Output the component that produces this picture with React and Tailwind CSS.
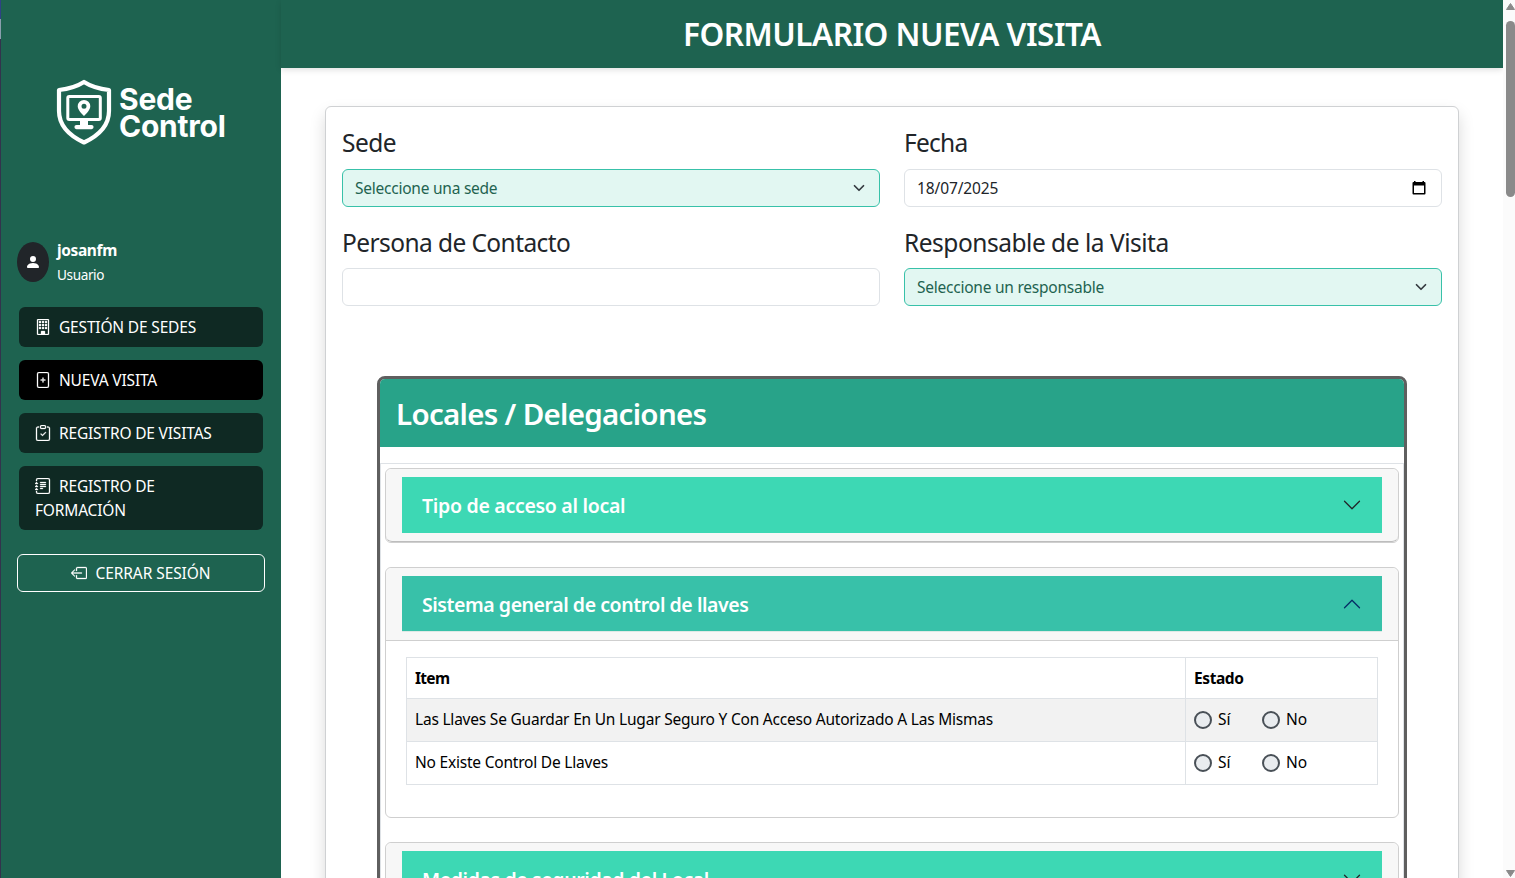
import React from "react";
import {
  BsBuilding,
  BsFilePlus,
  BsClipboardCheck,
  BsJournalText,
  BsBoxArrowLeft,
  BsPersonFill,
} from "react-icons/bs";

function Logo() {
  return (
    <div className="flex h-[66px] items-center pl-[55px]">
      <svg viewBox="0 0 56 66" className="h-[66px] w-14 shrink-0" fill="none" stroke="white">
        <path
          d="M28 3C21 7.500 12 10 3 11V32C3 46 12 56 28 63.500C44 56 53 46 53 32V11C44 10 35 7.500 28 3Z"
          strokeWidth="4.200"
          strokeLinejoin="round"
        />
        <rect x="11.800" y="17.500" width="32.500" height="23" rx="1.500" strokeWidth="3" />
        <path d="M24 41H32V46H35.500a2.100 2.100 0 0 1 0 4.200H20.500a2.100 2.100 0 0 1 0-4.200H24Z" fill="white" stroke="none" />
        <path
          d="M28 21a6.300 6.300 0 0 0-6.300 6.300c0 4.200 6.300 9.800 6.300 9.800s6.300-5.600 6.300-9.800a6.300 6.300 0 0 0-6.300-6.300Zm0 3.700a2.500 2.500 0 1 1 0 5a2.500 2.500 0 0 1 0-5Z"
          fill="white"
          fillRule="evenodd"
          stroke="none"
        />
      </svg>
      <div className="ml-[7px] mt-px font-['Inter',sans-serif] text-[30px] font-bold leading-[27px] tracking-[-0.25px] text-white">
        <div>Sede</div>
        <div>Control</div>
      </div>
    </div>
  );
}

function NavItem({ icon: Icon, children, active }) {
  return (
    <a
      className={
        "block rounded-md px-4 py-2 text-[15.5px] leading-6 tracking-[-0.17px] text-white " +
        (active ? "bg-black" : "bg-[#0f2923]")
      }
    >
      <Icon className="mr-2 inline-block size-4 stroke-[0.3] align-[-2px]" />
      {children}
    </a>
  );
}

function Chevron({ className = "", up, size = 16, width = 2 }) {
  return (
    <svg viewBox="0 0 16 16" width={size} height={size} fill="none" stroke="currentColor" strokeWidth={width} strokeLinecap="round" strokeLinejoin="round" className={"shrink-0 " + className}>
      <path d={up ? "m2 11 6-6 6 6" : "m2 5 6 6 6-6"} />
    </svg>
  );
}

function CalendarIcon() {
  return (
    <svg viewBox="0 0 14 14" className="h-3.5 w-3.5 shrink-0">
      <path
        fill="black"
        fillRule="evenodd"
        d="M2 0h1.500v1h7V0H12v1h.5a1 1 0 0 1 1 1v10.500a1 1 0 0 1-1 1h-11a1 1 0 0 1-1-1V2a1 1 0 0 1 1-1H2ZM2 4.500v7.500h10V4.500Z"
      />
    </svg>
  );
}

function Field({ label, labelClass, children }) {
  return (
    <div className="flex flex-col">
      <label className={"h-[29px] whitespace-nowrap text-[24.5px] leading-[29px] text-[#212529] " + labelClass}>{label}</label>
      {children}
    </div>
  );
}

function Select({ children }) {
  return (
    <div className="flex h-[38px] items-center justify-between rounded-md border border-[#38c1a9] bg-[#e2f7f2] pl-3 pr-3.5 text-[15.5px] leading-6 tracking-[-0.24px] text-[#1f6350]">
      {children}
      <Chevron className="text-[#343a40]" size={12} width={2.3} />
    </div>
  );
}

function Panel({ title, titleClass, open, children }) {
  return (
    <section className="rounded-md border border-[#cfcfcf] bg-white">
      <div className={"rounded-t-md border-b bg-[#f7f7f7] px-4 py-2 " + (open ? "border-[#cfcfcf]" : "rounded-b-md border-[#bdbdbd]")}>
        <div className={"flex h-14 items-center justify-between px-5 text-white " + (open ? "border-b border-[#dee9e6] bg-[#38c1a9]" : "bg-[#3dd8b4]")}>
          <span className={"whitespace-nowrap pt-0.5 text-[19.5px] font-semibold " + titleClass}>{title}</span>
          <Chevron up={open} size={20} width={1} className={open ? "text-[#052c65]" : "text-[#212529]"} />
        </div>
      </div>
      {children}
    </section>
  );
}

function Radio({ children, className = "" }) {
  return (
    <label className={"flex items-center " + className}>
      <span className="mr-1.5 size-[18px] rounded-full border-2 border-[#495057] bg-[#e9ecef]" />
      {children}
    </label>
  );
}

function Row({ text, striped }) {
  return (
    <div className={"flex h-[43px] border-b border-[#dee2e6] " + (striped ? "bg-[#f2f2f2]" : "")}>
      <div className="flex w-[779px] items-center border-r border-[#dee2e6] pb-px pl-2 tracking-[-0.21px]">{text}</div>
      <div className="flex items-center pl-2">
        <Radio className="w-[68px]">Sí</Radio>
        <Radio>No</Radio>
      </div>
    </div>
  );
}

export default function App() {
  return (
    <div className="flex h-[878px] w-[1515px] overflow-hidden bg-white font-['Noto_Sans',sans-serif] text-[15.5px] text-black">
      <div className="flex w-px flex-col bg-[#33334d]">
        <div className="h-[19px] bg-[#2f4285]" />
        <div className="h-5 bg-[#8a9fae]" />
      </div>
      <aside className="flex w-[280px] flex-col bg-[#1e6350]">
        <div className="mt-[79px]"><Logo /></div>
        <div className="mt-[93px] flex h-12 items-center pl-4">
          <div className="flex h-10 w-8 items-center justify-center rounded-[50%] bg-[#212529]">
            <BsPersonFill className="size-4 text-white" />
          </div>
          <div className="ml-2 text-white">
            <div className="font-bold leading-6 tracking-[-0.38px]">josanfm</div>
            <div className="pt-px text-[13.6px] leading-6 tracking-[-0.4px]">Usuario</div>
          </div>
        </div>
        <nav className="mt-[21px] flex flex-col gap-[13px] px-[18px]">
          <NavItem icon={BsBuilding}>GESTIÓN DE SEDES</NavItem>
          <NavItem icon={BsFilePlus} active>NUEVA VISITA</NavItem>
          <NavItem icon={BsClipboardCheck}>REGISTRO DE VISITAS</NavItem>
          <NavItem icon={BsJournalText}>REGISTRO DE<br />FORMACIÓN</NavItem>
        </nav>
        <button className="mx-4 mt-6 flex h-[38px] items-center justify-center rounded-md border border-white leading-6 tracking-[-0.08px] text-white">
          <BsBoxArrowLeft className="mr-2 size-4 stroke-[0.3]" />
          CERRAR SESIÓN
        </button>
      </aside>
      <main className="flex w-[1222px] flex-col">
        <header className="flex h-[68px] shrink-0 items-center justify-center bg-[#1e6350] text-[31.5px] font-semibold tracking-[-0.5px] text-white shadow-[0_2px_6px_rgba(0,0,0,0.12)]">
          FORMULARIO NUEVA VISITA
        </header>
        <div className="mx-11 mt-[38px] h-[900px] shrink-0 rounded-md border border-[#cfd1d3] bg-white px-4 pt-[21px] shadow-[0_8px_16px_rgba(0,0,0,0.15)]">
          <div className="grid grid-cols-2 gap-x-6 gap-y-[21px]">
            <Field label="Sede" labelClass="mb-3 tracking-[-0.5px]"><Select>Seleccione una sede</Select></Field>
            <Field label="Fecha" labelClass="mb-3 tracking-[-0.75px]">
              <div className="flex h-[38px] items-center justify-between rounded-md border border-[#dee2e6] pl-3 pr-[15px] leading-6 tracking-[-0.12px] text-[#212529]">
                18/07/2025
                <CalendarIcon />
              </div>
            </Field>
            <Field label="Persona de Contacto" labelClass="mb-[11px] tracking-[-0.58px]"><div className="h-[38px] rounded-md border border-[#dee2e6]" /></Field>
            <Field label="Responsable de la Visita" labelClass="mb-[11px] tracking-[-0.48px]"><Select>Seleccione un responsable</Select></Field>
          </div>
          <div className="mx-[35px] mt-[70px] h-[700px] rounded-lg border-[3px] border-[#5f5f5f]">
            <h2 className="flex h-[68px] items-center rounded-t-[5px] bg-[#28a389] pl-4 pt-0.5 text-[29.5px] font-semibold tracking-[-0.7px] text-white">Locales / Delegaciones</h2>
            <div className="mt-4 flex flex-col gap-6 border border-[#dee2e6] p-1">
              <Panel title="Tipo de acceso al local" titleClass="tracking-[-0.29px]" />
              <Panel title="Sistema general de control de llaves" titleClass="tracking-[-0.44px]" open>
                <div className="px-5 pb-8 pt-4">
                  <div className="border border-b-0 border-[#dee2e6]">
                    <div className="flex h-[41px] border-b border-[#dee2e6] font-bold leading-6">
                      <div className="flex w-[779px] items-center border-r border-[#dee2e6] pl-2 tracking-[-0.7px]">Item</div>
                      <div className="flex items-center pl-2 tracking-[-0.4px]">Estado</div>
                    </div>
                    <Row striped text="Las Llaves Se Guardar En Un Lugar Seguro Y Con Acceso Autorizado A Las Mismas" />
                    <Row text="No Existe Control De Llaves" />
                  </div>
                </div>
              </Panel>
              <Panel title="Medidas de seguridad del Local" titleClass="tracking-[-0.38px]" />
            </div>
          </div>
        </div>
      </main>
      <div className="flex w-3 flex-col items-end justify-between bg-[#fbfbfb] pb-px pt-[3px]">
        <div>
          <svg viewBox="0 0 9 7" className="h-[7px] w-[9px]"><path d="M4.500 0.500 8.500 6.500H0.500Z" fill="#8a8a8a" stroke="#8a8a8a" strokeLinejoin="round" /></svg>
          <div className="mt-[11px] h-44 w-[9px] rounded-full bg-[#8a8a8a]" />
        </div>
        <svg viewBox="0 0 9 7" className="h-[7px] w-[9px]"><path d="M4.500 6.500 8.500 0.500H0.500Z" fill="#8a8a8a" stroke="#8a8a8a" strokeLinejoin="round" /></svg>
      </div>
    </div>
  );
}
